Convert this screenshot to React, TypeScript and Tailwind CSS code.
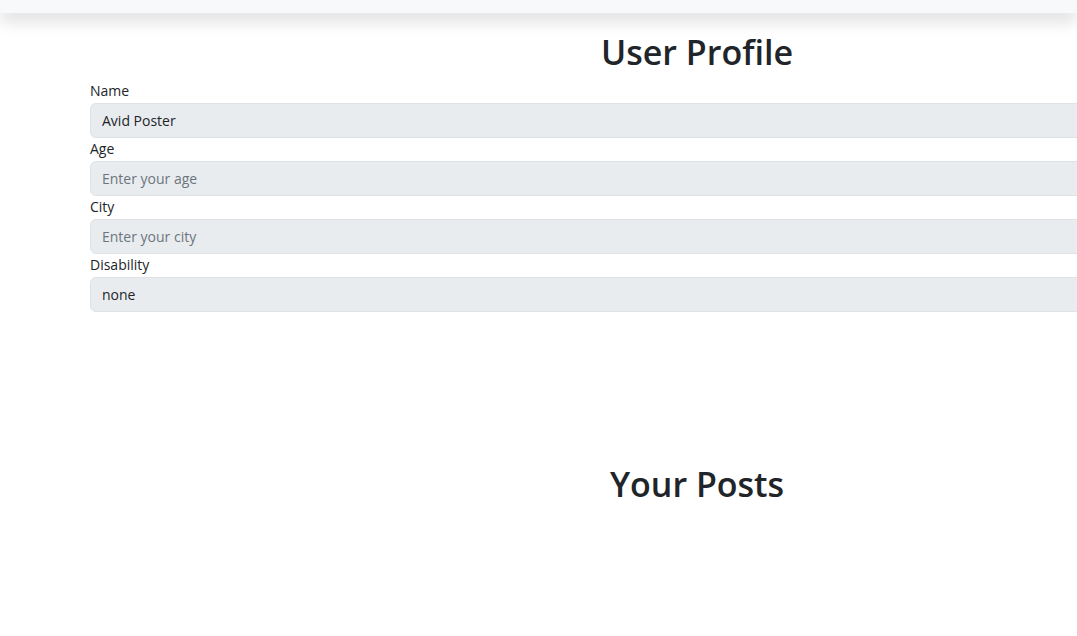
const fields = [
  { label: "Name", value: "Avid Poster", placeholder: "Enter your name" },
  { label: "Age", value: "", placeholder: "Enter your age" },
  { label: "City", value: "", placeholder: "Enter your city" },
  { label: "Disability", value: "none", placeholder: "Enter your disability" },
];

function Field({ label, value, placeholder }: { label: string; value: string; placeholder: string }) {
  return (
    <div>
      <label className="block text-[14px] leading-[22px] text-[#212529]">{label}</label>
      <input
        readOnly
        defaultValue={value}
        placeholder={placeholder}
        className="mt-px block h-[35px] w-full rounded-[6px] border border-[#dee2e6] bg-[#e9ecef] px-[11px] text-[14px] text-[#212529] outline-none placeholder:text-[#6c757d]"
      />
    </div>
  );
}

export default function App() {
  return (
    <div
      className="relative min-h-[636px] overflow-hidden bg-white"
      style={{ fontFamily: '"Open Sans", "Noto Sans", sans-serif' }}
    >
      <nav className="relative z-10 h-[13px] bg-[#f8f9fa] shadow-[0_8px_16px_rgba(0,0,0,0.15)]" />
      <div className="ml-[78px] w-[1238px] px-3">
        <h1 className="mt-[16px] mb-[5px] text-center text-[34px] font-semibold leading-[46px] text-[#212529]">
          User Profile
        </h1>
        <div className="flex flex-col">
          {fields.map((f) => (
            <Field key={f.label} {...f} />
          ))}
        </div>
        <h2 className="mt-[149px] text-center text-[34px] font-semibold leading-[46px] text-[#212529]">
          Your Posts
        </h2>
      </div>
    </div>
  );
}
